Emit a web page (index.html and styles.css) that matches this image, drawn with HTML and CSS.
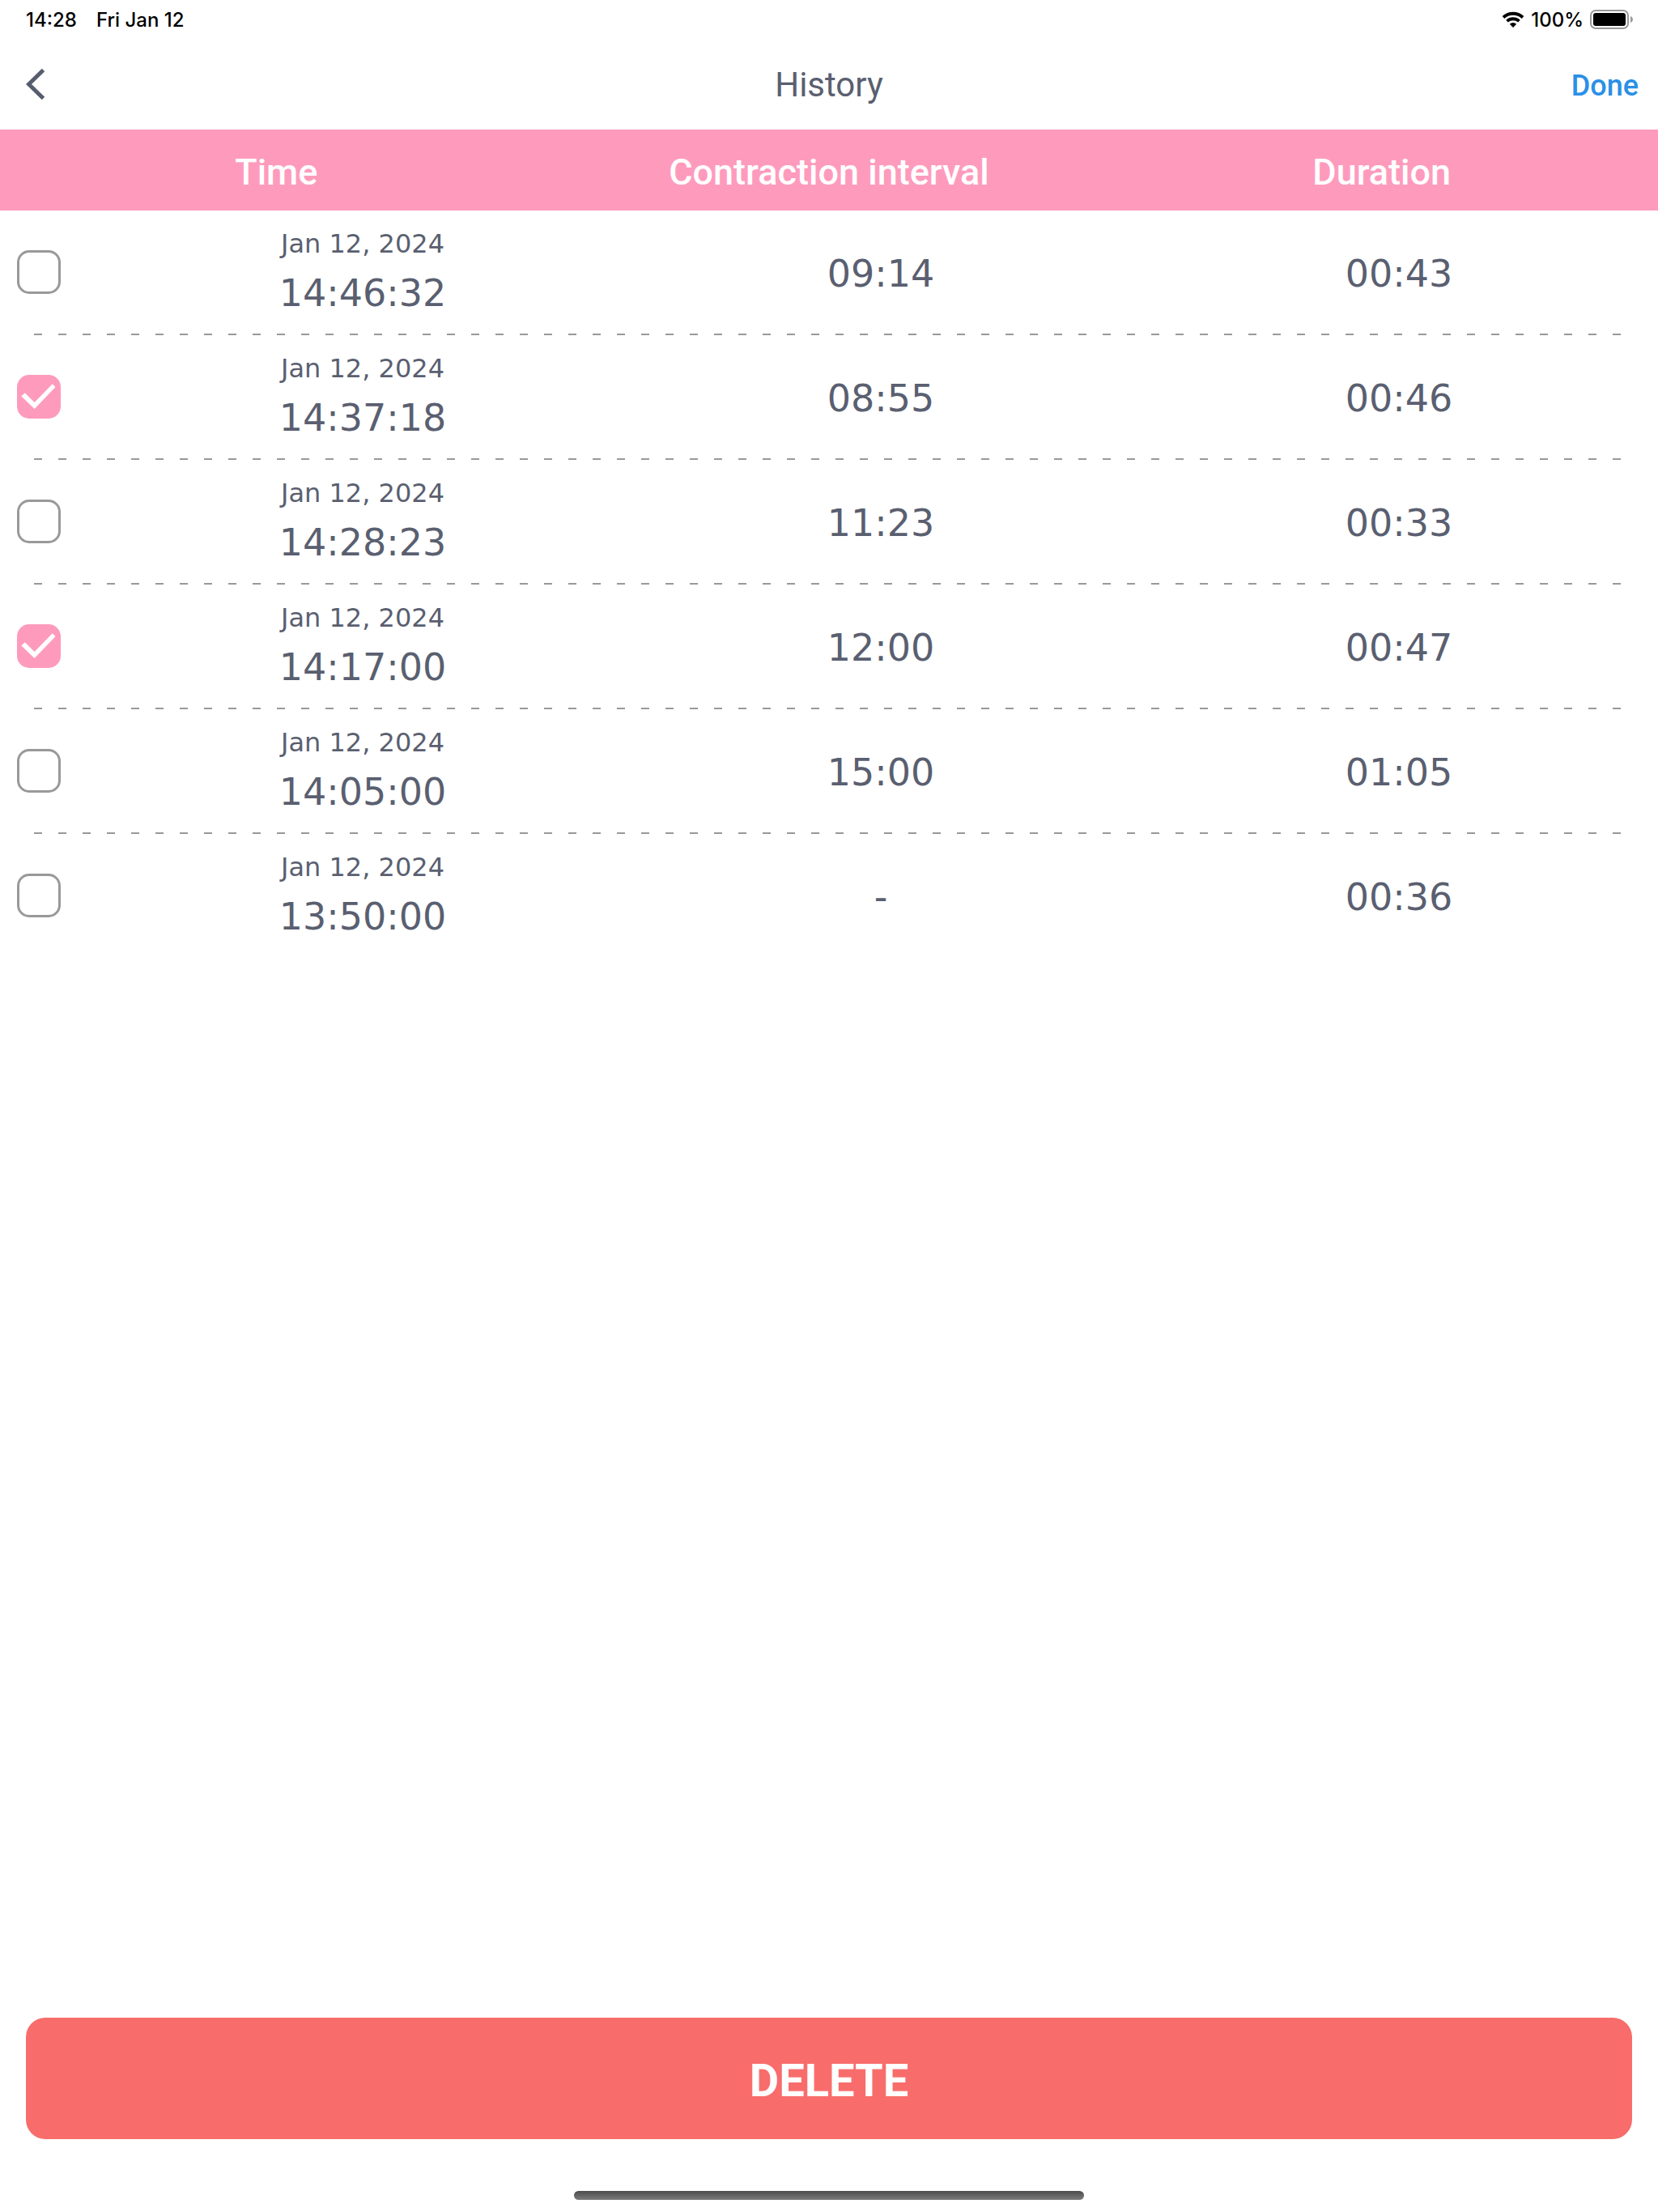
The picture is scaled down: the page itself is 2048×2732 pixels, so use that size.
FILE: index.html
```html
<!DOCTYPE html>
<html lang="en">
<head>
    <meta charset="UTF-8">
    <meta name="viewport" content="width=device-width, initial-scale=1.0">
    <title>History</title>
    <link rel="stylesheet" href="styles.css">
</head>
<body>
    <div class="status-bar">
        <div class="status-group status-left">
            <span>14:28</span>
            <span>Fri Jan 12</span>
        </div>
        <div class="status-group">
            <svg class="wifi" viewBox="0 0 28 20" aria-hidden="true">
                <path d="M2 7.500A17.500 17.500 0 0 1 26 7.500" fill="none" stroke="#000" stroke-width="4"/>
                <path d="M6.500 12.200A11 11 0 0 1 21.500 12.200" fill="none" stroke="#000" stroke-width="3.800"/>
                <path d="M14 20l-4.200-4.300a6 6 0 0 1 8.400 0z"/>
            </svg>
            <span>100%</span>
            <svg class="battery" viewBox="0 0 54 24" aria-hidden="true">
                <rect x="1" y="1" width="46" height="22" rx="6" fill="none" stroke="#999" stroke-width="2"/>
                <rect x="4" y="4" width="40" height="16" rx="3"/>
                <path d="M50 8c4 2 4 6 0 8z" fill="#999"/>
            </svg>
        </div>
    </div>

    <header class="nav">
        <button class="back" type="button" aria-label="Back">
            <svg viewBox="0 0 24 40" aria-hidden="true">
                <path d="M21.500 2.500L3.500 20L21.500 37.500" fill="none" stroke="#555d6e" stroke-width="5"/>
            </svg>
        </button>
        <h1>History</h1>
        <button class="done" type="button">Done</button>
    </header>

    <main>
        <table class="history">
            <thead>
                <tr>
                    <th scope="col">Time</th>
                    <th scope="col">Contraction interval</th>
                    <th scope="col">Duration</th>
                </tr>
            </thead>
            <tbody>
                <tr>
                    <td class="time-cell">
                        <input type="checkbox" id="row1">
                        <label for="row1"><span class="date">Jan 12, 2024</span><span class="time">14:46:32</span></label>
                    </td>
                    <td class="value">09:14</td>
                    <td class="value">00:43</td>
                </tr>
                <tr>
                    <td class="time-cell">
                        <input type="checkbox" id="row2" checked>
                        <label for="row2"><span class="date">Jan 12, 2024</span><span class="time">14:37:18</span></label>
                    </td>
                    <td class="value">08:55</td>
                    <td class="value">00:46</td>
                </tr>
                <tr>
                    <td class="time-cell">
                        <input type="checkbox" id="row3">
                        <label for="row3"><span class="date">Jan 12, 2024</span><span class="time">14:28:23</span></label>
                    </td>
                    <td class="value">11:23</td>
                    <td class="value">00:33</td>
                </tr>
                <tr>
                    <td class="time-cell">
                        <input type="checkbox" id="row4" checked>
                        <label for="row4"><span class="date">Jan 12, 2024</span><span class="time">14:17:00</span></label>
                    </td>
                    <td class="value">12:00</td>
                    <td class="value">00:47</td>
                </tr>
                <tr>
                    <td class="time-cell">
                        <input type="checkbox" id="row5">
                        <label for="row5"><span class="date">Jan 12, 2024</span><span class="time">14:05:00</span></label>
                    </td>
                    <td class="value">15:00</td>
                    <td class="value">01:05</td>
                </tr>
                <tr>
                    <td class="time-cell">
                        <input type="checkbox" id="row6">
                        <label for="row6"><span class="date">Jan 12, 2024</span><span class="time">13:50:00</span></label>
                    </td>
                    <td class="value">-</td>
                    <td class="value">00:36</td>
                </tr>
            </tbody>
        </table>
    </main>

    <footer>
        <button class="delete" type="button">DELETE</button>
        <div class="home-indicator"></div>
    </footer>
</body>
</html>
```
FILE: styles.css
```css
* {
    box-sizing: border-box;
}
body {
    display: flex;
    flex-direction: column;
    min-height: 100vh;
    margin: 0;
    background-color: #fff;
    color: #5a5f70;
    font-family: Roboto, sans-serif;
}
button {
    padding: 0;
    border: none;
    background: none;
    font-family: inherit;
    cursor: pointer;
}
svg {
    display: block;
}

/* Status bar */
.status-bar {
    display: flex;
    justify-content: space-between;
    align-items: center;
    height: 48px;
    padding: 0 30px 0 32px;
    color: #000;
    font-family: Inter, sans-serif;
    font-size: 24px;
    font-weight: 500;
}
.status-group {
    display: flex;
    align-items: center;
    gap: 8px;
}
.status-left {
    gap: 24px;
}
.wifi {
    width: 28px;
    height: 20px;
}
.battery {
    width: 54px;
    height: 24px;
}

/* Navigation */
.nav {
    display: grid;
    grid-template-columns: 1fr auto 1fr;
    align-items: center;
    height: 112px;
    padding: 0 24px;
}
.back {
    justify-self: start;
    padding: 0 8px;
}
.back svg {
    width: 24px;
    height: 40px;
}
.nav h1 {
    margin: 0;
    font-size: 42px;
    font-weight: 400;
}
.done {
    justify-self: end;
    padding-top: 4px;
    color: #2b90e6;
    font-size: 36px;
    font-weight: 500;
}

/* History table */
.history {
    display: block;
}
.history thead,
.history tbody {
    display: block;
}
.history tr {
    display: grid;
    align-items: center;
}
.history thead tr {
    grid-template-columns: repeat(3, 1fr);
    height: 100px;
    background-color: #fe9bbd;
    color: #fff;
}
.history th {
    padding: 4px 0 0;
    font-size: 45px;
    font-weight: 500;
    text-align: center;
}
.history tbody tr {
    grid-template-columns: 128px repeat(3, 1fr);
    height: 154px;
    padding-bottom: 2px;
}
/* dashed separator between rows */
.history tbody tr:not(:last-child) {
    background: repeating-linear-gradient(to right, #999 0 10px, transparent 10px 30px) 42px 100% / calc(100% - 86px) 2px no-repeat;
}
.history td {
    padding: 0;
    font-family: "DejaVu Sans", sans-serif;
    font-size: 46px;
    line-height: 70px;
    text-align: center;
}
.history .value {
    padding-top: 4px;
}
.history .time-cell {
    display: grid;
    grid-column: span 2;
    grid-template-columns: subgrid;
    align-items: center;
}
.time-cell input {
    appearance: none;
    width: 54px;
    height: 54px;
    margin: 0 0 0 21px;
    border: 3px solid #999;
    border-radius: 15px;
}
.time-cell input:checked {
    border: none;
    background-color: #fe9bbd;
}
.time-cell input:checked::before {
    content: "";
    display: block;
    height: 100%;
    background-color: #fff;
    clip-path: polygon(10% 49%, 18% 41%, 40% 63%, 81% 21%, 88% 28%, 40% 78%);
}
.date,
.time {
    display: block;
}
.date {
    font-size: 32px;
    line-height: 52px;
}

/* Footer */
footer {
    margin-top: auto;
    padding: 0 32px 15px;
}
.delete {
    display: block;
    width: 100%;
    height: 150px;
    padding-top: 5px;
    border-radius: 24px;
    background-color: #f86d6b;
    color: #fff;
    font-size: 56px;
    font-weight: 700;
}
.home-indicator {
    width: 630px;
    max-width: 60%;
    height: 11px;
    margin: 64px auto 0;
    border-radius: 6px;
    background: linear-gradient(#4c4c4c, #7c7c7c);
}
```
